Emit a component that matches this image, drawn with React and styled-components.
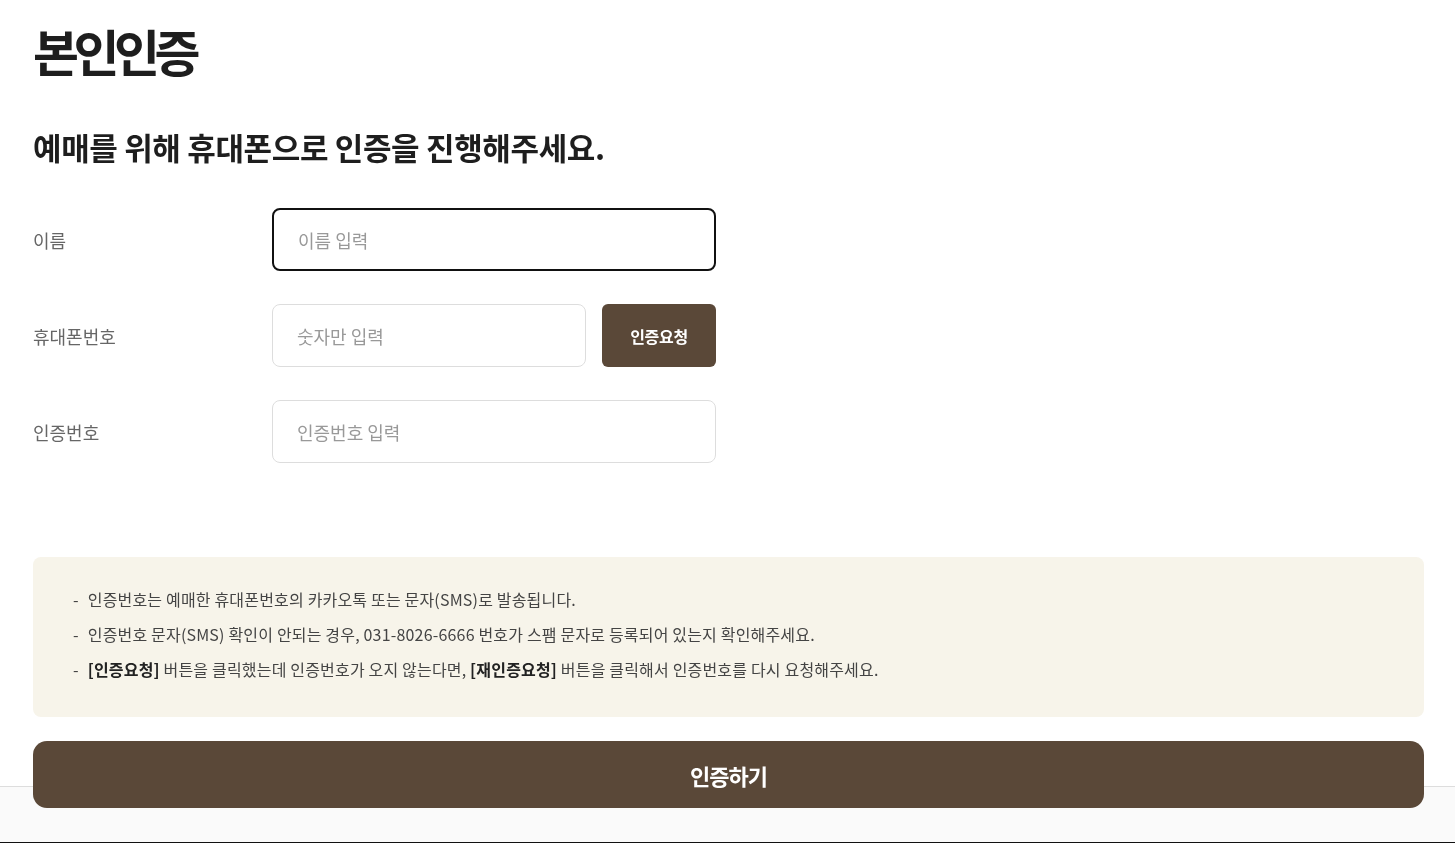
import React from "react";
import styled, { createGlobalStyle } from "styled-components";

const GlobalStyle = createGlobalStyle`
  * { box-sizing: border-box; }
  body {
    margin: 0;
    background: #fff;
    font-family: "Noto Sans CJK KR", "Noto Sans", sans-serif;
    color: #222;
  }
`;

const Page = styled.main`
  padding: 14px 31px 0 33px;
  position: relative;
  z-index: 1;
`;

const Title = styled.h1`
  margin: 0;
  font-size: 50px;
  line-height: 72px;
  font-weight: 700;
  letter-spacing: -5.5px;
  color: #1e1e1e;
`;

const SubTitle = styled.h2`
  margin: 39px 0 0;
  font-size: 31px;
  line-height: 44px;
  font-weight: 700;
  letter-spacing: -0.35px;
  color: #1e1e1e;
`;

const Form = styled.div`
  display: flex;
  flex-direction: column;
  gap: 33px;
  margin-top: 39px;
`;

const Row = styled.div`
  display: grid;
  grid-template-columns: 239px 444px;
  align-items: center;
`;

const Label = styled.label`
  font-size: 18px;
  color: #666;
  letter-spacing: 0;
`;

const Field = styled.div`
  display: flex;
  gap: 16px;
`;

const Input = styled.input`
  flex: 1;
  min-width: 0;
  height: 63px;
  padding: 0 24px;
  border: ${p => (p.$focused ? "2px solid #111" : "1px solid #ddd")};
  border-radius: 8px;
  font-family: inherit;
  font-size: 18px;
  letter-spacing: 0;
  color: #222;
  outline: none;
  background: #fff;
  &::placeholder { color: #999; }
`;

const SmallButton = styled.button`
  width: 114px;
  height: 63px;
  flex-shrink: 0;
  border: 0;
  border-radius: 6px;
  background: #5a4838;
  color: #fff;
  font-family: inherit;
  font-size: 16px;
  font-weight: 700;
  letter-spacing: -0.3px;
`;

const Notice = styled.ul`
  list-style: none;
  margin: 94px 0 0;
  padding: 25px 40px 30px;
  background: #f7f4ea;
  border-radius: 8px;
`;

const NoticeItem = styled.li`
  font-size: 16px;
  line-height: 35px;
  color: #444;
  letter-spacing: 0.18px;
  &::before {
    content: "-";
    margin-right: 9px;
  }
  b { color: #222; font-weight: 700; }
`;

const SubmitButton = styled.button`
  display: block;
  width: 100%;
  height: 67px;
  margin-top: 24px;
  border: 0;
  border-radius: 14px;
  background: #5a4838;
  color: #fff;
  font-family: inherit;
  font-size: 22px;
  font-weight: 700;
  letter-spacing: -1px;
`;

const BottomBar = styled.div`
  position: fixed;
  left: 0;
  right: 0;
  bottom: 0;
  height: 57px;
  background: #fafafa;
  border-top: 1px solid #ddd;
  border-bottom: 1px solid #111;
  z-index: 0;
`;

export default function App() {
  return (
    <>
      <GlobalStyle />
      <Page>
        <Title>본인인증</Title>
        <SubTitle>예매를 위해 휴대폰으로 인증을 진행해주세요.</SubTitle>

        <Form>
          <Row>
            <Label>이름</Label>
            <Field>
              <Input $focused placeholder="이름 입력" />
            </Field>
          </Row>
          <Row>
            <Label>휴대폰번호</Label>
            <Field>
              <Input placeholder="숫자만 입력" />
              <SmallButton>인증요청</SmallButton>
            </Field>
          </Row>
          <Row>
            <Label>인증번호</Label>
            <Field>
              <Input placeholder="인증번호 입력" />
            </Field>
          </Row>
        </Form>

        <Notice>
          <NoticeItem>인증번호는 예매한 휴대폰번호의 카카오톡 또는 문자(SMS)로 발송됩니다.</NoticeItem>
          <NoticeItem>인증번호 문자(SMS) 확인이 안되는 경우, 031-8026-6666 번호가 스팸 문자로 등록되어 있는지 확인해주세요.</NoticeItem>
          <NoticeItem>
            <b>[인증요청]</b> 버튼을 클릭했는데 인증번호가 오지 않는다면, <b>[재인증요청]</b> 버튼을 클릭해서 인증번호를 다시 요청해주세요.
          </NoticeItem>
        </Notice>

        <SubmitButton>인증하기</SubmitButton>
      </Page>
      <BottomBar />
    </>
  );
}
